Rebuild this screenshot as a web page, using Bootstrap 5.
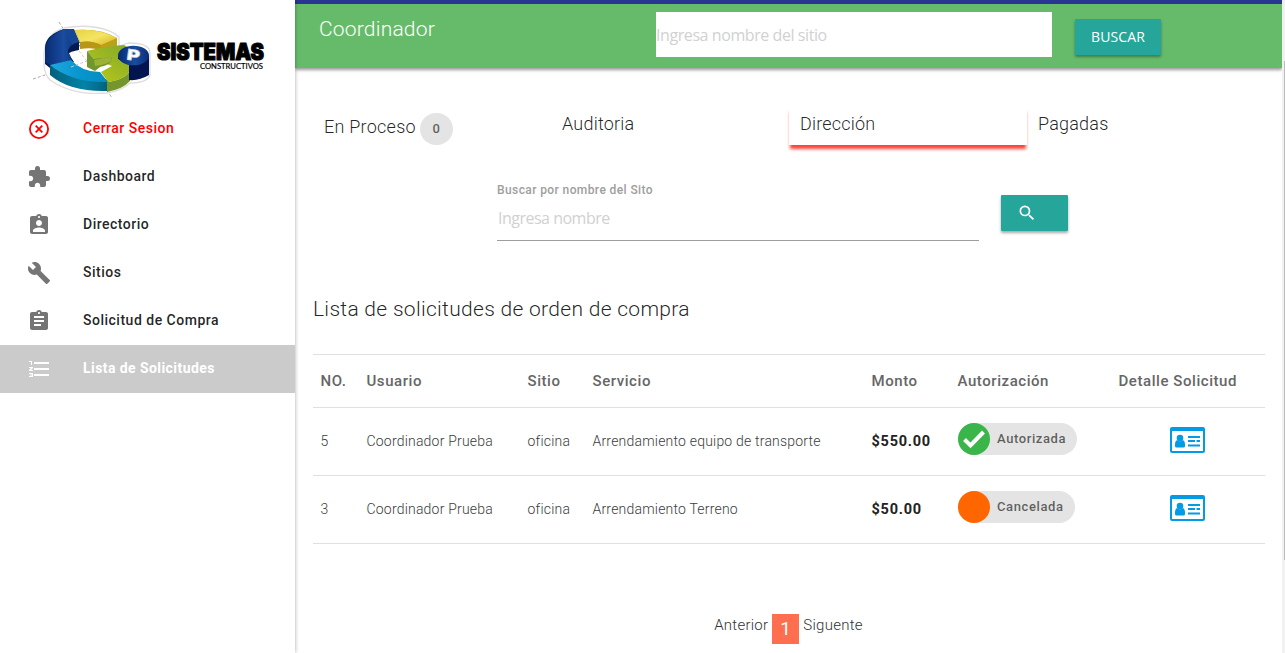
<!DOCTYPE html>
<html lang="es">
<head>
<meta charset="utf-8">
<meta name="viewport" content="width=device-width, initial-scale=1">
<title>Coordinador - Lista de Solicitudes</title>
<link href="https://cdn.jsdelivr.net/npm/bootstrap@5.3.0/dist/css/bootstrap.min.css" rel="stylesheet">
<style>
  body { font-family: Roboto, "Liberation Sans", sans-serif; font-weight: 300; color: rgba(0,0,0,.87); height: 653px; overflow: hidden; line-height: 1.5; }
  .side { width: 295px; box-shadow: 0 0 4px rgba(0,0,0,.35); z-index: 3; }
  .logo { height: 105px; }
  .side .nav-link { height: 48px; padding: 0 0 2px 27px; color: rgba(0,0,0,.87); font-size: 14px; font-weight: 500; letter-spacing: .5px; }
  .side .nav-link svg { width: 24px; height: 24px; margin-right: 32px; fill: #757575; position: relative; top: 1px; }
  .side .nav-link.exit { color: red; }
  .side .nav-link.exit svg { fill: none; stroke: red; }
  .side .nav-link.active { background: #cbcbcb; color: #fff; font-weight: 700; letter-spacing: .43px; }
  .side .nav-link.active svg { fill: #fff; }
  .topbar { height: 68px; background: #66bb6a; border-top: 4px solid #283593; box-shadow: 0 2px 3px rgba(0,0,0,.4); color: #fff; padding: 0 120px 0 24px; }
  .brand { font-size: 21px; width: 337px; line-height: 50px; letter-spacing: .2px; }
  .ui { font-family: "Open Sans", "Noto Sans", sans-serif; font-weight: 400; }
  .ui::placeholder { color: #d1d1d1; opacity: 1; }
  .top-input { width: 396px; height: 45px; margin-top: 8px; padding: 1px 0 0; font-size: 16px; letter-spacing: -.42px; }
  .teal { background: #26a69a; color: #fff; height: 36px; box-shadow: 0 2px 3px rgba(0,0,0,.35); border: 0; border-radius: 1px; }
  .teal-top { width: 86px; margin: 15px 0 0 23px; font-size: 14px; padding: 0 0 2px; letter-spacing: .1px; }
  .content-area { padding: 0 17px 0 18px; }
  .tabs { margin-top: 38px; height: 39px; font-size: 18px; letter-spacing: .2px; }
  .tab { padding-left: 11px; line-height: 36px; height: 39px; }
  .tab.first { padding-top: 2px; letter-spacing: .25px; }
  .tab.active { box-shadow: 0 5px 3px -1px #ff4336; background: #fff; }
  .count { width: 33px; height: 32px; line-height: 32px; border-radius: 16px; background: #e4e4e4; font-size: 13px; font-weight: 500; color: rgba(0,0,0,.6); margin: 4px 0 0 4px; }
  .search { padding-left: 184px; margin-top: 36px; height: 61px; }
  .search label { font-size: 12px; font-weight: 500; color: #9e9e9e; line-height: 18px; letter-spacing: .4px; }
  .search .ui { width: 482px; height: 42px; border: 0; border-bottom: 1px solid #9e9e9e; padding: 0 0 3px 1px; font-size: 16px; letter-spacing: -.5px; outline: 0; }
  .teal-find { width: 67px; margin: 14px 0 0 22px; padding: 0 0 0 16px; }
  .title { font-size: 21px; font-weight: 300; margin: 51px 0 0; line-height: 32px; letter-spacing: .3px; }
  .orders { width: 952px; margin: 29px 0 0; table-layout: fixed; border-top: 1px solid #e0e0e0; --bs-table-color: #555; }
  .orders > :not(caption) > * > * { padding: 0 0 0 7.500px; border-bottom: 1px solid #e0e0e0; vertical-align: middle; background: none; box-shadow: none; white-space: nowrap; }
  .orders th { height: 53px; font-size: 15px; font-weight: 500; color: #666; letter-spacing: .56px; }
  .orders td { height: 68px; font-size: 14px; color: #3c3c3c; letter-spacing: .2px; }
  .orders td.amount { font-size: 14.500px; font-weight: 700; color: #222; letter-spacing: .75px; }
  .c1 { width: 46px; } .c2 { width: 161px; } .c3 { width: 65px; } .c4 { width: 279px; } .c5 { width: 86px; } .c6 { width: 161px; }
  .orders tbody tr td.detail { padding: 0 2px 4px 0; }
  .chip { height: 32px; border-radius: 16px; background: #e4e4e4; font-size: 13px; font-weight: 500; color: rgba(0,0,0,.6); padding: 0 11px 0 0; margin-bottom: 5px; letter-spacing: .6px; }
  .chip svg { width: 32px; height: 32px; margin: 0 7.500px 0 0; }
  .pager { margin-top: 66px; font-size: 15px; letter-spacing: .25px; width: 100%; padding-right: 1px; }
  .pager a { color: #333; text-decoration: none; line-height: 30px; }
  .pager .now { width: 27px; height: 30px; line-height: 30px; background: #ff6e4e; color: #fff; font-size: 19px; font-weight: 400; margin: 4px 4px 0; }
  .gutter { width: 3px; background: #f1f1f1; padding: 61px 0 0 2px; }
  .thumb { height: 499px; background: #bcbcbc; }
</style>
</head>
<body>
<div class="d-flex h-100">
  <aside class="side flex-shrink-0 bg-white position-relative">
    <svg class="logo d-block" width="295" height="105" viewBox="0 0 295 105">
      <defs>
        <linearGradient id="navy" x1="0" x2="1"><stop offset="0" stop-color="#082b73"/><stop offset=".55" stop-color="#1a4c9f"/><stop offset="1" stop-color="#0b2d78"/></linearGradient>
        <linearGradient id="sky" x1="0" x2="1"><stop offset="0" stop-color="#20a7df"/><stop offset=".5" stop-color="#0796ce"/><stop offset="1" stop-color="#078bc0"/></linearGradient>
        <linearGradient id="teal" x1="0" x2="1"><stop offset="0" stop-color="#01607d"/><stop offset=".6" stop-color="#0383a7"/><stop offset="1" stop-color="#01607e"/></linearGradient>
        <linearGradient id="gold" x1="0" x2="1" y2="1"><stop offset="0" stop-color="#e5d342"/><stop offset=".5" stop-color="#f5e463"/><stop offset="1" stop-color="#d5b51f"/></linearGradient>
        <linearGradient id="lime" x1="0" y1="1" x2="1" y2="0"><stop offset="0" stop-color="#bdcb16"/><stop offset="1" stop-color="#7ba52d"/></linearGradient>
      </defs>
      <path d="M59 22l5 8M33 79l18-6M107 90l5 8M121 48l8-4" stroke="#aaa" stroke-dasharray="3 2" fill="none"/>
      <path d="M64 28C86 24 108 27 119 37v9l10-3q21 0 21 10v22q-3 8-20 8-9 8-23 10-34 3-57-13-5-5-6-14V56c0-14 7-24 20-28z" fill="#fff" stroke="#ddd" stroke-width="1.300"/>
      <path d="M64 29Q45 35 45 48v16l5 4 24-6-5-12 11-4z" fill="#061f59"/>
      <path d="M64 29Q45 37 45 51v11l6 3 21-5-4-8q1-7 11-10z" fill="url(#navy)"/>
      <path d="M64 29l10 0 6 14-8 2z" fill="#164795"/>
      <path d="M68 52q0-7 11-10v8q-7 3-8 8z" fill="#031b50"/>
      <path d="M75 30q26-2 42 8v9l-17 3-20-7z" fill="#bba018"/>
      <path d="M75 30q24-2 42 8l-16 7q-9-5-21-3z" fill="url(#gold)"/>
      <path d="M80 42q11-2 21 3l-1 5q-8-3-20-1z" fill="#b99614"/>
      <path d="M50 65v10q20 17 57 16l1-11z" fill="url(#teal)"/>
      <path d="M50 65l21-5q11 12 29 12l8 10q-36 1-58-17z" fill="url(#sky)"/>
      <path d="M69 53q9-4 20-3l5 20q-19-1-25-17z" fill="#fff"/>
      <path d="M71 67l16-6M79 51l8 10" stroke="#ccc" stroke-dasharray="3 2" fill="none"/>
      <path d="M107 82q20-3 23-12v11q-7 8-23 11z" fill="#75962c"/>
      <path d="M87 51q19-5 37-6l14 9-9 9 1 7q-3 9-22 12l-7-10 11-6-18-7z" fill="url(#lime)"/>
      <path d="M87 51l7 8q18-3 18 0 0 5-12 8l-5 4-8-4z" fill="#71972c"/>
      <path d="M94 60q18-5 18 0-3 4-17 6z" fill="#9bb234"/>
      <path d="M118 56v3l11 5v16q10 1 20-5V56z" fill="#031450"/>
      <ellipse cx="133.500" cy="55.500" rx="15.500" ry="9.800" fill="url(#navy)"/>
      <text x="127" y="60.500" font-family="Inter" font-size="15" font-weight="900" fill="#fff" stroke="#c9d1df" stroke-width=".6" transform="rotate(8 133 54)" textLength="13" lengthAdjust="spacingAndGlyphs">P</text>
      <text x="157" y="60" font-family="Inter" font-size="22.500" font-weight="900" textLength="107" lengthAdjust="spacingAndGlyphs" stroke="#000" stroke-width="1.100">SISTEMAS</text>
      <text x="200" y="69.300" font-family="Lato" font-size="7.700" font-weight="400" stroke="#000" stroke-width=".2" textLength="63" lengthAdjust="spacingAndGlyphs">CONSTRUCTIVOS</text>
    </svg>
    <nav class="nav flex-column flex-nowrap">
      <a class="nav-link exit d-flex align-items-center" href="#"><svg viewBox="0 0 24 24"><circle cx="12" cy="12" r="9.100" stroke-width="1.800"/><path d="M8.700 8.700l6.600 6.600m0-6.600l-6.600 6.600" stroke-width="1.800"/></svg>Cerrar Sesion</a>
      <a class="nav-link d-flex align-items-center" href="#"><svg viewBox="0 0 24 24"><path d="M20.500 11H19V7c0-1.100-.9-2-2-2h-4V3.500a2.500 2.500 0 0 0-5 0V5H4c-1.100 0-1.990.9-1.990 2v3.800H3.500c1.490 0 2.700 1.210 2.700 2.700s-1.210 2.700-2.700 2.700H2V20c0 1.100.9 2 2 2h3.800v-1.500c0-1.490 1.210-2.700 2.700-2.700s2.700 1.210 2.700 2.700V22H17c1.100 0 2-.9 2-2v-4h1.500a2.500 2.500 0 0 0 0-5z"/></svg>Dashboard</a>
      <a class="nav-link d-flex align-items-center" href="#"><svg viewBox="0 0 24 24"><path d="M19 3h-4.180C14.400 1.840 13.300 1 12 1s-2.400.84-2.820 2H5c-1.100 0-2 .9-2 2v14c0 1.100.9 2 2 2h14c1.100 0 2-.9 2-2V5c0-1.100-.9-2-2-2zm-7 0c.55 0 1 .45 1 1s-.45 1-1 1-1-.45-1-1 .45-1 1-1zm0 4c1.660 0 3 1.340 3 3s-1.340 3-3 3-3-1.340-3-3 1.340-3 3-3zm6 12H6v-1.400c0-2 4-3.100 6-3.100s6 1.100 6 3.100V19z"/></svg>Directorio</a>
      <a class="nav-link d-flex align-items-center" href="#"><svg viewBox="0 0 24 24"><path d="M22.700 19l-9.100-9.100c.9-2.300.4-5-1.500-6.900-2-2-5-2.400-7.400-1.300L9 6 6 9 1.600 4.700C.4 7.100.9 10.100 2.900 12.100c1.900 1.900 4.600 2.400 6.900 1.500l9.100 9.100c.4.4 1 .4 1.400 0l2.300-2.300c.5-.4.5-1.100.1-1.400z"/></svg>Sitios</a>
      <a class="nav-link d-flex align-items-center" href="#"><svg viewBox="0 0 24 24"><path d="M19 3h-4.180C14.400 1.840 13.300 1 12 1s-2.400.84-2.820 2H5c-1.100 0-2 .9-2 2v14c0 1.100.9 2 2 2h14c1.100 0 2-.9 2-2V5c0-1.100-.9-2-2-2zm-7 0c.55 0 1 .45 1 1s-.45 1-1 1-1-.45-1-1 .45-1 1-1zm2 14H7v-2h7v2zm3-4H7v-2h10v2zm0-4H7V7h10v2z"/></svg>Solicitud de Compra</a>
      <a class="nav-link active d-flex align-items-center" href="#"><svg viewBox="0 0 24 24"><path d="M7 5h15v2H7zm0 6h15v2H7zm0 6h15v2H7zM2 4h3v4H4V5H2zm0 6h4v1l-2 2h2v1H2v-1l2-2H2zm0 6h4v4H2v-1h3v-.5H3v-1h2V17H2z"/></svg>Lista de Solicitudes</a>
    </nav>
  </aside>

  <main class="flex-grow-1">
    <header class="topbar d-flex align-items-start">
      <div class="brand">Coordinador</div>
      <input class="top-input ui form-control rounded-0 border-0 flex-shrink-0" placeholder="Ingresa nombre del sitio">
      <button class="btn teal teal-top ui flex-shrink-0">BUSCAR</button>
    </header>
    <div class="content-area">
      <div class="tabs row g-0">
        <div class="tab first col-3 d-flex align-items-center"><span>En Proceso</span><span class="count text-center">0</span></div>
        <div class="tab col-3">Auditoria</div>
        <div class="tab active col-3">Dirección</div>
        <div class="tab col-3">Pagadas</div>
      </div>
      <form class="search d-flex">
        <div class="d-flex flex-column">
          <label for="site">Buscar por nombre del Sito</label>
          <input id="site" class="ui" placeholder="Ingresa nombre">
        </div>
        <button type="button" class="btn teal teal-find text-start" aria-label="Buscar"><svg class="d-block" width="20" height="20" viewBox="0 0 24 24" fill="#fff"><path d="M15.500 14h-.79l-.28-.27A6.471 6.471 0 0 0 16 9.500 6.500 6.500 0 1 0 9.500 16c1.610 0 3.090-.59 4.230-1.570l.27.28v.79l5 4.990L20.490 19l-4.990-5zm-6 0C7.010 14 5 11.990 5 9.500S7.010 5 9.500 5 14 7.010 14 9.500 11.990 14 9.500 14z"/></svg></button>
      </form>
      <h5 class="title">Lista de solicitudes de orden de compra</h5>
      <table class="table orders">
        <thead><tr><th class="c1">NO.</th><th class="c2">Usuario</th><th class="c3">Sitio</th><th class="c4">Servicio</th><th class="c5">Monto</th><th class="c6">Autorización</th><th>Detalle Solicitud</th></tr></thead>
        <tbody>
          <tr><td>5</td><td>Coordinador Prueba</td><td>oficina</td><td>Arrendamiento equipo de transporte</td><td class="amount">$550.00</td>
            <td><span class="chip d-inline-flex align-items-center"><svg viewBox="0 0 32 32"><circle cx="16" cy="16" r="16" fill="#39b54a"/><path d="M6.500 16.500l6 6L25.500 9" fill="none" stroke="#fff" stroke-width="4"/></svg>Autorizada</span></td>
            <td class="detail"><svg class="d-block mx-auto" width="35" height="26" viewBox="0 0 35 26" fill="#039be5"><path fill-rule="evenodd" d="M2 0h31q2 0 2 2v22q0 2-2 2H2q-2 0-2-2V2q0-2 2-2zm0 4v20h31V4z"/><circle cx="10" cy="11" r="3.300"/><path d="M7 13q3 2.500 6 0 2 1 2 4v2q0 1.500-1.500 1.500h-7Q5 20.500 5 19v-2q0-3 2-4zM18 9h12v2H18zm0 4h7v2h-7zm8.500 0H30v2h-3.500zM18 17.500h12v2H18z"/></svg></td></tr>
          <tr><td>3</td><td>Coordinador Prueba</td><td>oficina</td><td>Arrendamiento Terreno</td><td class="amount">$50.00</td>
            <td><span class="chip d-inline-flex align-items-center"><svg viewBox="0 0 32 32"><circle cx="16" cy="16" r="16" fill="#f60"/></svg>Cancelada</span></td>
            <td class="detail"><svg class="d-block mx-auto" width="35" height="26" viewBox="0 0 35 26" fill="#039be5"><path fill-rule="evenodd" d="M2 0h31q2 0 2 2v22q0 2-2 2H2q-2 0-2-2V2q0-2 2-2zm0 4v20h31V4z"/><circle cx="10" cy="11" r="3.300"/><path d="M7 13q3 2.500 6 0 2 1 2 4v2q0 1.500-1.500 1.500h-7Q5 20.500 5 19v-2q0-3 2-4zM18 9h12v2H18zm0 4h7v2h-7zm8.500 0H30v2h-3.500zM18 17.500h12v2H18z"/></svg></td></tr>
        </tbody>
      </table>
      <div class="pager d-flex justify-content-center"><a href="#">Anterior</a><span class="now text-center">1</span><a href="#">Siguente</a></div>
    </div>
  </main>
  <div class="gutter flex-shrink-0"><div class="thumb"></div></div>
</div>
<script src="https://cdn.jsdelivr.net/npm/bootstrap@5.3.0/dist/js/bootstrap.bundle.min.js"></script>
</body>
</html>
